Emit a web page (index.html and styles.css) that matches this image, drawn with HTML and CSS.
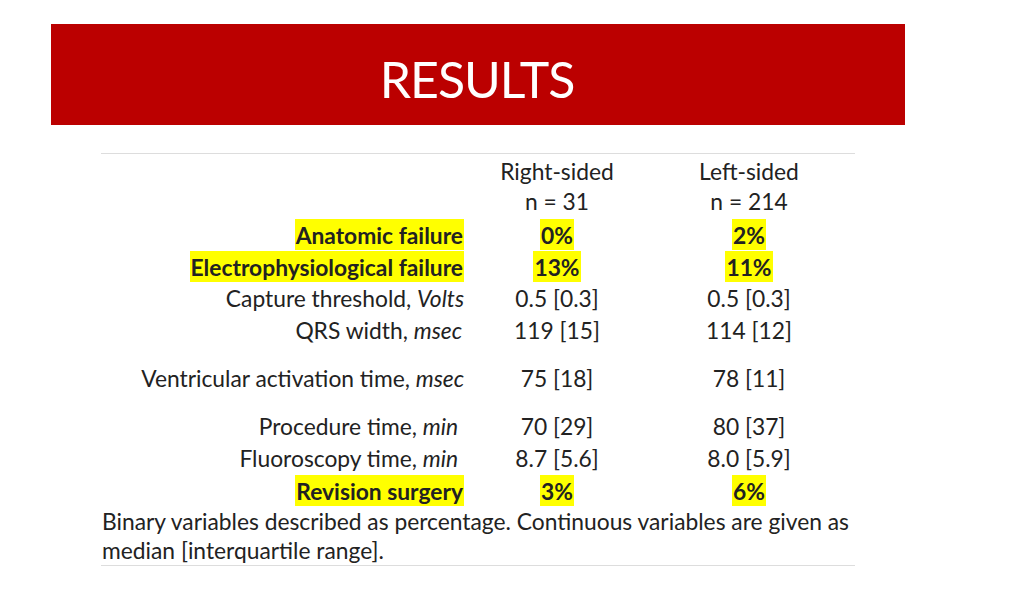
FILE: index.html
```html
<!DOCTYPE html>
<html>
<head>
<meta charset="utf-8">
<link rel="stylesheet" href="styles.css">
</head>
<body>
<div class="slide">
  <header class="banner"><h1 class="title">RESULTS</h1></header>
  <section class="results">
    <div class="row head first">
      <div class="label"></div><div class="val">Right-sided</div><div class="val">Left-sided</div>
    </div>
    <div class="row head">
      <div class="label"></div><div class="val">n = 31</div><div class="val">n = 214</div>
    </div>
    <div class="row data lead">
      <div class="label"><span class="hl">Anatomic failure</span></div><div class="val"><span class="hl">0%</span></div><div class="val"><span class="hl">2%</span></div>
    </div>
    <div class="row data">
      <div class="label"><span class="hl">Electrophysiological failure</span></div><div class="val"><span class="hl">13%</span></div><div class="val"><span class="hl">11%</span></div>
    </div>
    <div class="row data">
      <div class="label">Capture threshold, <em>Volts</em></div><div class="val">0.5 [0.3]</div><div class="val">0.5 [0.3]</div>
    </div>
    <div class="row data">
      <div class="label qrs">QRS width, <em>msec</em></div><div class="val">119 [15]</div><div class="val">114 [12]</div>
    </div>
    <div class="row data spaced">
      <div class="label">Ventricular activation time, <em>msec</em></div><div class="val">75 [18]</div><div class="val">78 [11]</div>
    </div>
    <div class="row data spaced">
      <div class="label shift">Procedure time, <em>min</em></div><div class="val">70 [29]</div><div class="val">80 [37]</div>
    </div>
    <div class="row data">
      <div class="label shift">Fluoroscopy time, <em>min</em></div><div class="val">8.7 [5.6]</div><div class="val">8.0 [5.9]</div>
    </div>
    <div class="row data">
      <div class="label"><span class="hl">Revision surgery</span></div><div class="val"><span class="hl">3%</span></div><div class="val"><span class="hl">6%</span></div>
    </div>
    <p class="note">Binary variables described as percentage. Continuous variables are given as median [interquartile range].</p>
  </section>
</div>
</body>
</html>
```
FILE: styles.css
```css
html, body {
  margin: 0;
  padding: 0;
  background: #ffffff;
}
body {
  font-family: "Lato", "Carlito", "Liberation Sans", sans-serif;
  color: #222222;
}
.slide {
  width: 1024px;
  height: 603px;
  padding-top: 24px;
  box-sizing: border-box;
}
.banner {
  margin-left: 51px;
  width: 854px;
  height: 101px;
  background: #bb0000;
  display: flex;
  align-items: center;
  justify-content: center;
}
.title {
  margin: 0;
  padding: 8px 0 0 0;
  font-weight: 400;
  font-size: 50px;
  color: #ffffff;
  letter-spacing: -1px;
  line-height: 1;
  position: relative;
  left: -1px;
}
.results {
  margin: 28px 0 0 101px;
  width: 754px;
  border-top: 1px solid #dddddd;
  border-bottom: 1px solid #dddddd;
  padding-top: 2px;
  font-size: 22.8px;
}
.row {
  display: grid;
  grid-template-columns: 370px 172px 212px;
  align-items: center;
}
.head { height: 30px; }
.row.data { height: 32px; }
.row.lead { margin-top: 2px; }
.row.spaced { margin-top: 16px; }
.label {
  text-align: right;
  padding-right: 7px;
  white-space: nowrap;
}
.label.qrs { padding-right: 9px; }
.label.shift { padding-right: 13px; }
.val {
  text-align: center;
  white-space: nowrap;
}
.hl {
  background: #ffff00;
  font-weight: 700;
  padding: 1.5px 1px;
}
em { font-style: italic; }
.note {
  margin: 1px 0 0 1px;
  line-height: 29px;
  width: 760px;
}
```
